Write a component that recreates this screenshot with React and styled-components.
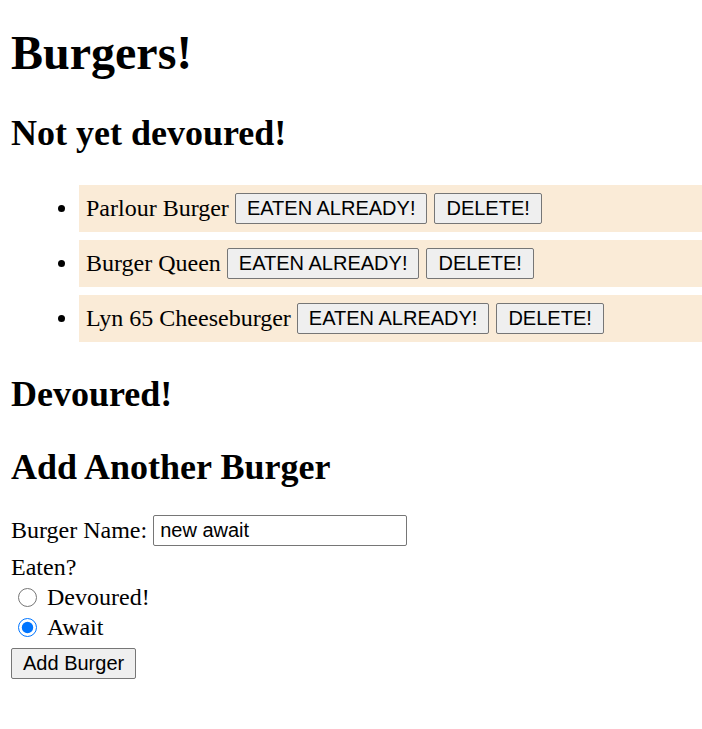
import React, { useState } from "react";
import styled, { createGlobalStyle } from "styled-components";

const GlobalStyle = createGlobalStyle`
  body {
    margin: 0 0 12px 11px;
    font-family: "Liberation Serif", "Times New Roman", serif;
    font-size: 24px;
    color: #000;
    background: #fff;
  }
`;

const Title = styled.h1`
  font-size: 48px;
  font-weight: bold;
  margin: 25px 0 32px;
`;

const Heading = styled.h2`
  font-size: 36px;
  font-weight: bold;
  margin: 31px 0 ${(p) => (p.$tight ? "26px" : "31px")};
`;

const BurgerList = styled.ul`
  margin: 31px 0 29px;
  padding-left: 68px;
`;

const BurgerItem = styled.li`
  background: antiquewhite;
  box-sizing: border-box;
  height: 47px;
  padding: 8px 7px;
  line-height: 31px;

  & + & {
    margin-top: 8px;
  }
`;

const Button = styled.button`
  font-family: "Liberation Sans", Arial, sans-serif;
  font-size: 20px;
  color: #000;
  background: #efefef;
  border: 1px solid #767676;
  border-radius: 2px;
  padding: 0 11px;
  height: 31px;
  vertical-align: top;
  margin-left: ${(p) => (p.$spaced ? "7px" : "0")};
`;

const Form = styled.form`
  margin: 0;
`;

const NameRow = styled.div`
  display: flex;
  align-items: center;
  height: 33px;
  gap: 6px;
`;

const TextInput = styled.input`
  font-family: "Liberation Sans", Arial, sans-serif;
  font-size: 20px;
  width: 254px;
  height: 31px;
  box-sizing: border-box;
  padding: 1px 6px;
  border: 1px solid #767676;
  border-radius: 2px;
  color: #000;
`;

const Prompt = styled.div`
  margin-top: 7px;
  height: 28px;
`;

const Option = styled.label`
  display: flex;
  align-items: center;
  gap: 10px;
  padding-left: 7px;
  height: 30px;
`;

const Radio = styled.input`
  width: 19px;
  height: 19px;
  margin: 0;
  accent-color: #0075ff;
`;

const Submit = styled(Button)`
  display: block;
  margin-top: 6px;
`;

const burgers = ["Parlour Burger", "Burger Queen", "Lyn 65 Cheeseburger"];

export default function App() {
  const [eaten, setEaten] = useState("await");
  return (
    <>
      <GlobalStyle />
      <Title>Burgers!</Title>
      <Heading>Not yet devoured!</Heading>
      <BurgerList>
        {burgers.map((b) => (
          <BurgerItem key={b}>
            {b} <Button>EATEN ALREADY!</Button>
            <Button $spaced>DELETE!</Button>
          </BurgerItem>
        ))}
      </BurgerList>
      <Heading>Devoured!</Heading>
      <Heading $tight>Add Another Burger</Heading>
      <Form onSubmit={(e) => e.preventDefault()}>
        <NameRow>
          Burger Name:
          <TextInput defaultValue="new await" />
        </NameRow>
        <Prompt>Eaten?</Prompt>
        <Option>
          <Radio
            type="radio"
            name="eaten"
            checked={eaten === "devoured"}
            onChange={() => setEaten("devoured")}
          />
          Devoured!
        </Option>
        <Option>
          <Radio
            type="radio"
            name="eaten"
            checked={eaten === "await"}
            onChange={() => setEaten("await")}
          />
          Await
        </Option>
        <Submit type="submit">Add Burger</Submit>
      </Form>
    </>
  );
}
